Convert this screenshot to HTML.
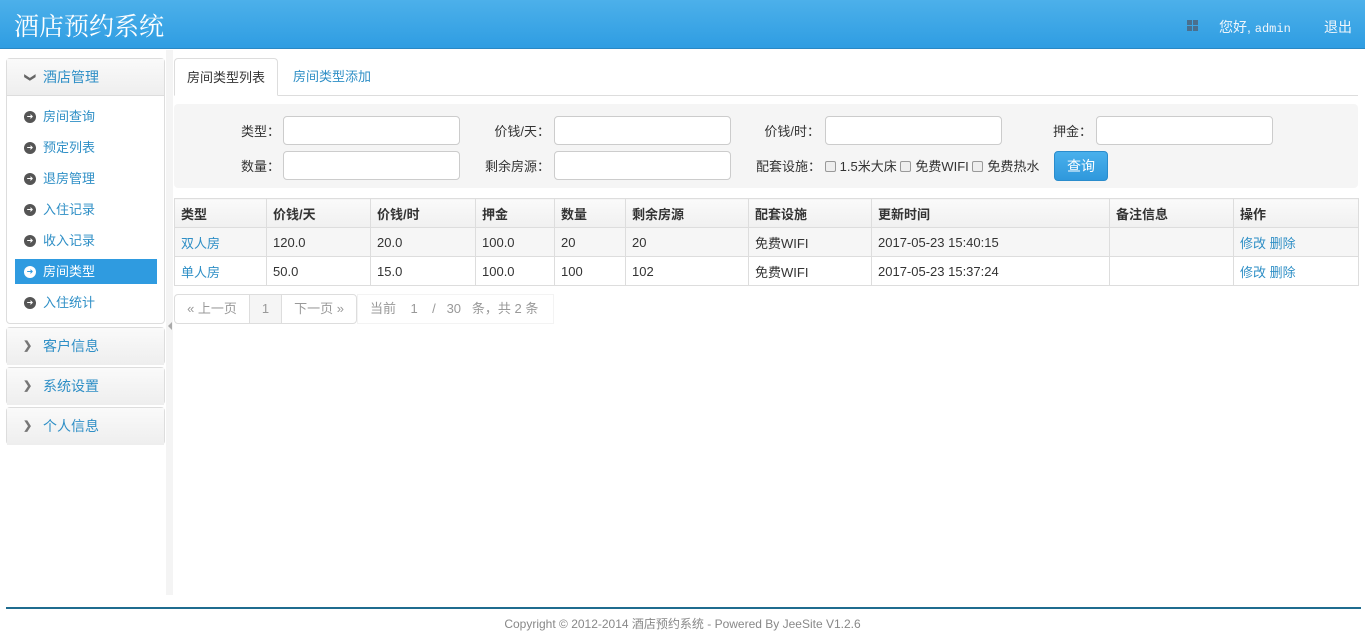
<!DOCTYPE html>
<html><head><meta charset="utf-8">
<style>
*{box-sizing:border-box;margin:0;padding:0}
body{width:1365px;height:635px;position:relative;background:#fff;font-family:"Liberation Sans","Noto Sans CJK SC",sans-serif;font-size:13px;color:#333;overflow:hidden}
.abs{position:absolute}
#hdr{left:0;top:0;width:1365px;height:49px;background:linear-gradient(#4cb0ea,#2f9de2);border-bottom:1px solid #2a88c4}
#hdr .t{left:14px;top:7px;font-size:25px;color:#fff;font-family:"Noto Serif CJK SC",serif}
#hdr .r{top:17px;color:#f0f6fb;font-size:14px}
.grid{left:1187px;top:20px;width:11px;height:11px}
.grid i{position:absolute;width:5px;height:5px;background:#4a6f8e}
.pnl{position:absolute;left:6px;width:159px;border:1px solid #ddd;border-radius:4px;background:#fff}
.ph{height:37px;background:linear-gradient(#fafafa,#eee);color:#2f8fc6;font-size:14px;line-height:37px;padding-left:36px;position:relative}
.ph .ic{position:absolute;left:16px;top:0;color:#666;font-size:11px;font-weight:bold}
.ph .ic.d{transform:rotate(90deg);left:18px}
.item{position:absolute;left:9px;width:142px;height:25px;line-height:25px;color:#2f8fc6;padding-left:28px;font-size:13px}
.item .c{position:absolute;left:9px;top:7px;width:12px;height:12px;border-radius:50%;background:#555;color:#fff;font-size:8px;line-height:12px;text-align:center}
.item.act{background:#2f9be0;color:#fff}
.item.act .c{background:#fff;color:#2f9be0}
#split{left:166px;top:50px;width:7px;height:545px;background:#f4f4f4}
.tab{top:58px;height:38px;line-height:38px;font-size:13px}
.form{left:174px;top:104px;width:1184px;height:84px;background:#f5f5f5;border-radius:4px}
.lbl{position:absolute;font-size:13px;color:#333;text-align:right}
.inp{position:absolute;width:177px;height:29px;background:#fff;border:1px solid #ccc;border-radius:4px}
.cb{display:inline-block;width:11px;height:11px;border:1px solid #999;border-radius:2px;background:#eee;vertical-align:-1px;margin-right:4px}
table{position:absolute;left:174px;top:198px;width:1185px;border-collapse:collapse;border:1px solid #ddd}
td,th{border:1px solid #ddd;height:29px;padding:0 6px;text-align:left;font-size:13px}
th{font-weight:bold;background:linear-gradient(#fafafa,#f0f0f0)}
tr.o td{background:#f6f6f6}
a{color:#2f8fc6;text-decoration:none}
.pg{top:294px;height:30px;border:1px solid #ddd;line-height:28px;color:#999;text-align:center;position:absolute}
</style></head><body>
<div id="hdr" class="abs"><div class="abs t">酒店预约系统</div>
<div class="abs grid"><i style="left:0;top:0"></i><i style="left:6px;top:0"></i><i style="left:0;top:6px"></i><i style="left:6px;top:6px"></i></div>
<div class="abs r" style="left:1219px">您好, <span style="font-family:'Liberation Mono',monospace;font-size:12px">admin</span></div>
<div class="abs r" style="left:1324px">退出</div></div>

<div class="pnl" style="top:58px;height:266px"><div class="ph" style="border-bottom:1px solid #ddd"><span class="ic d">❯</span>酒店管理</div></div>
<div class="item" style="top:104px;left:15px"><span class="c">➜</span>房间查询</div>
<div class="item" style="top:135px;left:15px"><span class="c">➜</span>预定列表</div>
<div class="item" style="top:166px;left:15px"><span class="c">➜</span>退房管理</div>
<div class="item" style="top:197px;left:15px"><span class="c">➜</span>入住记录</div>
<div class="item" style="top:228px;left:15px"><span class="c">➜</span>收入记录</div>
<div class="item act" style="top:259px;left:15px"><span class="c">➜</span>房间类型</div>
<div class="item" style="top:290px;left:15px"><span class="c">➜</span>入住统计</div>
<div class="pnl" style="top:327px;height:38px"><div class="ph"><span class="ic" style="color:#777">❯</span>客户信息</div></div>
<div class="pnl" style="top:367px;height:38px"><div class="ph"><span class="ic" style="color:#777">❯</span>系统设置</div></div>
<div class="pnl" style="top:407px;height:38px"><div class="ph"><span class="ic" style="color:#777">❯</span>个人信息</div></div>
<div id="split" class="abs"></div>
<div class="abs" style="left:168px;top:322px;width:0;height:0;border:4px solid transparent;border-right:4px solid #aaa;border-left:0"></div>

<div class="abs" style="left:174px;top:95px;width:1184px;height:1px;background:#ddd"></div>
<div class="abs tab" style="left:174px;width:104px;border:1px solid #ddd;border-bottom:1px solid #fff;border-radius:4px 4px 0 0;background:#fff;text-align:center;color:#333">房间类型列表</div>
<div class="abs tab" style="left:293px;color:#2f8fc6">房间类型添加</div>

<div class="abs form"></div>
<div class="lbl" style="left:220px;top:121px;width:60px">类型：</div><div class="inp" style="left:283px;top:116px"></div>
<div class="lbl" style="left:470px;top:121px;width:80px">价钱/天：</div><div class="inp" style="left:554px;top:116px"></div>
<div class="lbl" style="left:740px;top:121px;width:80px">价钱/时：</div><div class="inp" style="left:825px;top:116px"></div>
<div class="lbl" style="left:1010px;top:121px;width:82px">押金：</div><div class="inp" style="left:1096px;top:116px"></div>
<div class="lbl" style="left:220px;top:156px;width:60px">数量：</div><div class="inp" style="left:283px;top:151px"></div>
<div class="lbl" style="left:460px;top:156px;width:90px">剩余房源：</div><div class="inp" style="left:554px;top:151px"></div>
<div class="lbl" style="left:756px;top:156px;text-align:left;white-space:nowrap">配套设施：&nbsp;<span class="cb"></span>1.5米大床 <span class="cb"></span>免费WIFI <span class="cb"></span>免费热水</div>
<div class="abs" style="left:1054px;top:151px;width:54px;height:30px;background:linear-gradient(#49b0ec,#2f98dc);border:1px solid #2a8ccc;border-radius:4px;color:#fff;text-align:center;line-height:28px;font-size:14px">查询</div>

<table>
<tr><th style="width:92px">类型</th><th style="width:104px">价钱/天</th><th style="width:105px">价钱/时</th><th style="width:79px">押金</th><th style="width:71px">数量</th><th style="width:123px">剩余房源</th><th style="width:123px">配套设施</th><th style="width:238px">更新时间</th><th style="width:124px">备注信息</th><th>操作</th></tr>
<tr class="o"><td><a>双人房</a></td><td>120.0</td><td>20.0</td><td>100.0</td><td>20</td><td>20</td><td>免费WIFI</td><td>2017-05-23 15:40:15</td><td></td><td><a>修改</a> <a>删除</a></td></tr>
<tr><td><a>单人房</a></td><td>50.0</td><td>15.0</td><td>100.0</td><td>100</td><td>102</td><td>免费WIFI</td><td>2017-05-23 15:37:24</td><td></td><td><a>修改</a> <a>删除</a></td></tr>
</table>

<div class="pg" style="left:174px;width:76px;border-radius:4px 0 0 4px">« 上一页</div>
<div class="pg" style="left:249px;width:33px;background:#f5f5f5">1</div>
<div class="pg" style="left:281px;width:76px;border-radius:0 4px 4px 0">下一页 »</div>
<div class="pg" style="left:357px;width:197px;border-color:#f3f3f3;text-align:left;padding-left:12px;white-space:nowrap">当前 &nbsp; &nbsp;1 &nbsp; &nbsp;/ &nbsp;&nbsp;30 &nbsp; 条，共 2 条</div>

<div class="abs" style="left:6px;top:607px;width:1355px;height:2px;background:#1f6c8f"></div>
<div class="abs" style="left:0;top:615px;width:1365px;text-align:center;color:#888;font-size:12px">Copyright © 2012-2014 酒店预约系统 - Powered By JeeSite V1.2.6</div>
</body></html>
